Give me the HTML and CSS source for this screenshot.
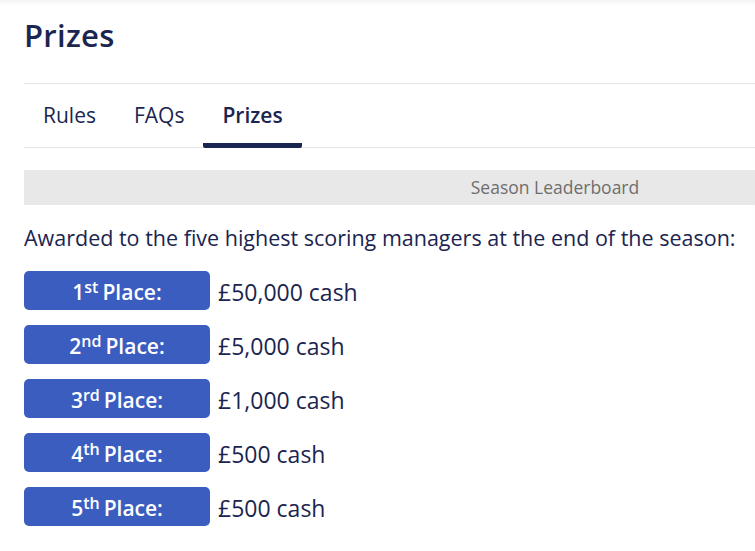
FILE: index.html
```html
<!DOCTYPE html>
<html lang="en">
<head>
<meta charset="utf-8">
<title>Prizes</title>
<link rel="stylesheet" href="styles.css">
</head>
<body>
<div class="page">
  <div class="content">
    <h1 class="title">Prizes</h1>
    <nav class="tabs">
      <span class="tab">Rules</span>
      <span class="tab">FAQs</span>
      <span class="tab active">Prizes</span>
    </nav>
    <div class="band">Season Leaderboard</div>
    <p class="intro">Awarded to the five highest scoring managers at the end of the season:</p>
    <ul class="prizes">
      <li class="prize"><span class="badge">1<sup>st</sup> Place:</span><span class="amount">£50,000 cash</span></li>
      <li class="prize"><span class="badge">2<sup>nd</sup> Place:</span><span class="amount">£5,000 cash</span></li>
      <li class="prize"><span class="badge">3<sup>rd</sup> Place:</span><span class="amount">£1,000 cash</span></li>
      <li class="prize"><span class="badge">4<sup>th</sup> Place:</span><span class="amount">£500 cash</span></li>
      <li class="prize"><span class="badge">5<sup>th</sup> Place:</span><span class="amount">£500 cash</span></li>
    </ul>
  </div>
</div>
</body>
</html>
```
FILE: styles.css
```css
html, body {
  margin: 0;
  padding: 0;
  overflow: hidden;
  background: #fff;
}
body {
  font-family: "Open Sans", "Noto Sans", sans-serif;
  color: #1b2550;
}
.page {
  min-height: 551px;
  box-shadow: inset 0 4px 4px -2px rgba(0, 0, 0, 0.06);
}
.content {
  width: 1062px;
  padding: 16px 0 0 24px;
}
.title {
  margin: 0;
  font-size: 31px;
  font-weight: 600;
  line-height: 38px;
  letter-spacing: 0.3px;
  padding-bottom: 29px;
  border-bottom: 1px solid #e6e6e6;
}
.tabs {
  display: flex;
  border-bottom: 1px solid #e6e6e6;
}
.tab {
  padding: 17px 19px 0;
  box-sizing: border-box;
  height: 64px;
  margin-bottom: -1px;
  font-size: 21px;
  line-height: 28px;
  border-bottom: 5px solid transparent;
}
.tab.active {
  font-weight: 600;
  border-bottom-color: #182550;
  border-radius: 0 0 2px 2px;
}
.band {
  margin-top: 22px;
  height: 35px;
  line-height: 35px;
  background: #e8e8e8;
  color: #6e6e6e;
  font-size: 17.5px;
  text-align: center;
}
.intro {
  margin: 19px 0 0;
  font-size: 21.5px;
  line-height: 28px;
}
.prizes {
  list-style: none;
  margin: 19px 0 0;
  padding: 0;
  display: flex;
  flex-direction: column;
  gap: 15px;
}
.prize {
  display: flex;
  align-items: center;
  gap: 8px;
}
.badge {
  width: 186px;
  height: 39px;
  box-sizing: border-box;
  border-radius: 5px;
  background: #3a5dbf;
  color: #fff;
  font-size: 21px;
  font-weight: 600;
  display: flex;
  align-items: center;
  justify-content: center;
  padding-top: 2px;
}
.badge sup {
  font-size: 16px;
  line-height: 0;
  position: relative;
  top: -5px;
  margin-right: 4px;
}
.amount {
  font-size: 23px;
  padding-top: 2px;
}
```
